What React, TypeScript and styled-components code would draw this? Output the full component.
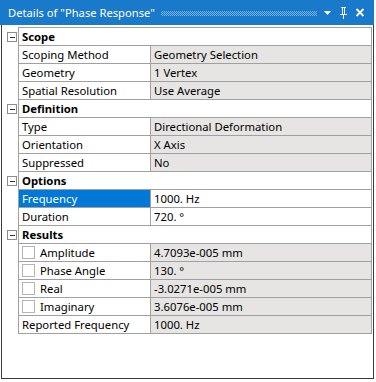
import React from "react";
import styled, { createGlobalStyle } from "styled-components";

const Global = createGlobalStyle`
  html, body { margin: 0; padding: 0; background: #ffffff; }
  body { font-family: "Noto Sans", "Open Sans", "DejaVu Sans", sans-serif; }
`;

const Window = styled.div`
  width: 374px;
  height: 379px;
  display: flex;
  flex-direction: column;
  background: #ffffff;
`;

const TitleBar = styled.div`
  height: 25px;
  flex: none;
  background: #1979ca;
  display: flex;
  align-items: center;
  padding: 0 9px 0 8px;
  color: #ffffff;
  font-size: 11.2px;
`;

const TitleText = styled.span`
  white-space: nowrap;
`;

const Dots = styled.div`
  flex: 1;
  height: 5px;
  margin: 1px 6px 0 6px;
  background-image: repeating-conic-gradient(#7ab1e2 0 25%, transparent 0 50%);
  background-size: 2px 2px;
`;

const TitleIcons = styled.div`
  display: flex;
  align-items: center;
  gap: 7px;
`;

const Body = styled.div`
  flex: 1;
  margin-left: 1px;
  border: 1px solid #3a3a3a;
  border-top: none;
  padding: 2px 1px 0 16px;
  display: flex;
  flex-direction: column;
`;

const Table = styled.div`
  border-top: 1px solid #a0a0a0;
  border-left: 1px solid #a0a0a0;
  border-right: 1px solid #a0a0a0;
  display: flex;
  flex-direction: column;
  font-size: 11.3px;
  color: #000000;
`;

const HeaderRow = styled.div`
  position: relative;
  height: 17px;
  border-bottom: 1px solid #a0a0a0;
  display: flex;
  align-items: center;
  padding-left: 3px;
  font-weight: 700;
`;

const Toggle = styled.span`
  position: absolute;
  left: -12px;
  top: 4px;
  width: 8px;
  height: 8px;
  border: 1px solid #8c8c8c;
  background: #ffffff;
  &::after {
    content: "";
    position: absolute;
    left: 2px;
    top: 4px;
    width: 5px;
    height: 1px;
    background: #333333;
  }
`;

const Row = styled.div`
  display: grid;
  grid-template-columns: 132px 1fr;
  height: 17px;
  border-bottom: 1px solid #a0a0a0;
`;

const NameCell = styled.div<{ $selected?: boolean }>`
  display: flex;
  align-items: center;
  gap: 5px;
  padding-left: 3px;
  border-right: 1px solid #a0a0a0;
  background: ${(p) => (p.$selected ? "#0078d7" : "#ffffff")};
  color: ${(p) => (p.$selected ? "#ffffff" : "#000000")};
  white-space: nowrap;
  overflow: hidden;
`;

const ValueCell = styled.div<{ $readonly?: boolean }>`
  display: flex;
  align-items: center;
  padding-left: 3px;
  background: ${(p) => (p.$readonly ? "#e6e5e3" : "#ffffff")};
  white-space: nowrap;
  overflow: hidden;
`;

const Check = styled.span`
  width: 11px;
  height: 11px;
  flex: none;
  border: 1px solid #b4b4b4;
  background: #ffffff;
`;

type Item = { name: string; value: string; readonly?: boolean; check?: boolean; selected?: boolean };
type Group = { title: string; items: Item[] };

const groups: Group[] = [
  {
    title: "Scope",
    items: [
      { name: "Scoping Method", value: "Geometry Selection", readonly: true },
      { name: "Geometry", value: "1 Vertex", readonly: true },
      { name: "Spatial Resolution", value: "Use Average", readonly: true },
    ],
  },
  {
    title: "Definition",
    items: [
      { name: "Type", value: "Directional Deformation", readonly: true },
      { name: "Orientation", value: "X Axis", readonly: true },
      { name: "Suppressed", value: "No", readonly: true },
    ],
  },
  {
    title: "Options",
    items: [
      { name: "Frequency", value: "1000. Hz", selected: true },
      { name: "Duration", value: "720. °" },
    ],
  },
  {
    title: "Results",
    items: [
      { name: "Amplitude", value: "4.7093e-005 mm", readonly: true, check: true },
      { name: "Phase Angle", value: "130. °", readonly: true, check: true },
      { name: "Real", value: "-3.0271e-005 mm", readonly: true, check: true },
      { name: "Imaginary", value: "3.6076e-005 mm", readonly: true, check: true },
      { name: "Reported Frequency", value: "1000. Hz", readonly: true },
    ],
  },
];

export default function App() {
  return (
    <>
      <Global />
      <Window>
        <TitleBar>
          <TitleText>Details of "Phase Response"</TitleText>
          <Dots />
          <TitleIcons>
            <svg width="9" height="14" viewBox="0 0 9 14">
              <path d="M1 5 H8 L4.5 9 Z" fill="#ffffff" />
            </svg>
            <svg width="9" height="14" viewBox="0 0 9 14">
              <path d="M2 1 H7 V2 H6 V8 H8 V9 H5 V13 H4 V9 H1 V8 H3 V2 H2 Z M4 2 V8 H5 V2 Z" fill="#ffffff" />
            </svg>
            <svg width="10" height="14" viewBox="0 0 10 14">
              <path d="M1.5 3 L8.5 10 M8.5 3 L1.5 10" stroke="#ffffff" strokeWidth="1.8" />
            </svg>
          </TitleIcons>
        </TitleBar>
        <Body>
          <Table>
            {groups.map((g) => (
              <React.Fragment key={g.title}>
                <HeaderRow>
                  <Toggle />
                  {g.title}
                </HeaderRow>
                {g.items.map((it) => (
                  <Row key={it.name}>
                    <NameCell $selected={it.selected}>
                      {it.check && <Check />}
                      {it.name}
                    </NameCell>
                    <ValueCell $readonly={it.readonly}>{it.value}</ValueCell>
                  </Row>
                ))}
              </React.Fragment>
            ))}
          </Table>
        </Body>
      </Window>
    </>
  );
}
